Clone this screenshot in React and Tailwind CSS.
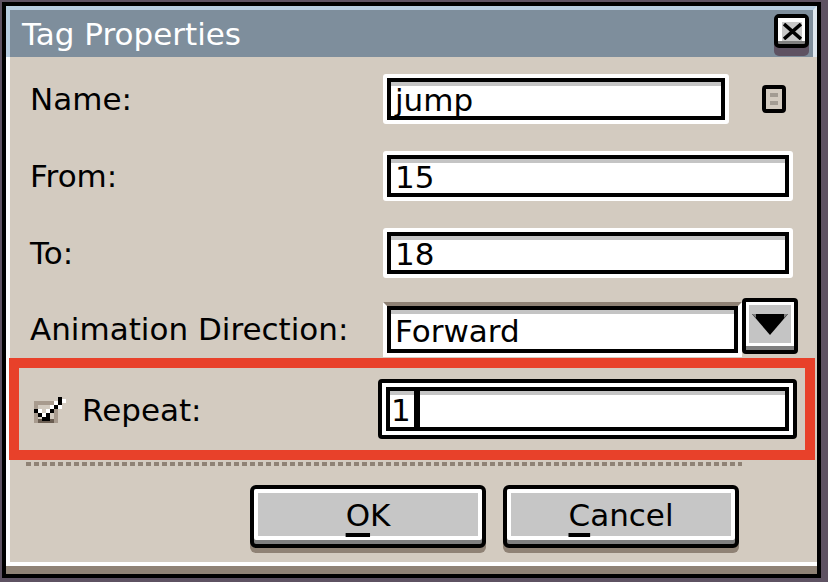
import React from 'react';

const font = { fontFamily: '"DejaVu Sans", "Liberation Sans", sans-serif' };

// plain text field: white outer ring, black ring, grey inset line on top
const TextField = ({ value, width }) => (
    <div className={`${width} h-[50px] border-4 border-white rounded-[3px]`}>
        <div className="h-full border-4 border-black bg-white shadow-[inset_0_4px_0_#c4c4c4] flex items-center pl-[4px] pt-[3px] text-black leading-none">
            {value}
        </div>
    </div>
);

const PixelButton = ({ children, width }) => (
    <button className={`${width} h-[63px] border-4 border-black rounded-[6px] bg-[#7f7f7f] pb-[4px] shadow-[0_5px_0_#8f8275]`}>
        <div className="h-full border-4 border-white rounded-[2px] bg-[#c6c6c6] flex items-center justify-center pt-[2px] text-black leading-none">
            {children}
        </div>
    </button>
);

const Mnemonic = ({ ch }) => (
    <span className="underline decoration-4 underline-offset-[7px] [text-decoration-skip-ink:none]">{ch}</span>
);

const App = () => {
    return (
        <div className="w-[828px] h-[582px] bg-[#5e5262] pt-[2px] pl-[2px] text-[31px]" style={font}>
            <div className="w-[819px] h-[576px] border-4 border-black flex flex-col bg-[#d3cbc0]">
                {/* Title bar */}
                <div className="h-[51px] border-t-4 border-l-4 border-r-4 border-t-[#b7cde0] border-l-[#b7cde0] border-r-[#dfe8ef] bg-[#7e8e9c] flex items-start justify-between">
                    <div className="pl-[12px] pt-[9px] text-white leading-none">Tag Properties</div>
                    <button className="mt-[4px] mr-[4px] w-[35px] h-[34px] border-4 border-black rounded-[5px] bg-[#7f7f7f] pb-[3px] shadow-[0_8px_0_#5e5262]">
                        <div className="h-full border-t-4 border-l-4 border-r-[3px] border-white bg-[#c8c8c8] flex items-center justify-center">
                            <svg width="19" height="17" viewBox="0 0 19 17">
                                <path d="M1 1 L18 16 M18 1 L1 16" stroke="#000" strokeWidth="3.5" />
                            </svg>
                        </div>
                    </button>
                </div>

                {/* Body */}
                <div className="flex-1 border-l-4 border-b-4 border-white flex flex-col pt-[17px]">
                    <div className="flex items-center h-[50px] pl-[20px]">
                        <div className="w-[353px] leading-none text-black">Name:</div>
                        <TextField value="jump" width="w-[346px]" />
                        <div className="ml-[33px] w-[24px] h-[28px] border-4 border-black rounded-[4px] bg-[#d3cbc0] flex flex-col items-center justify-center gap-[4px]">
                            <div className="w-[8px] h-[4px] bg-[#a39c93]" />
                            <div className="w-[8px] h-[4px] bg-[#a39c93]" />
                        </div>
                    </div>

                    <div className="flex items-center h-[50px] pl-[20px] mt-[27px]">
                        <div className="w-[353px] leading-none text-black">From:</div>
                        <TextField value="15" width="w-[410px]" />
                    </div>

                    <div className="flex items-center h-[50px] pl-[20px] mt-[27px]">
                        <div className="w-[353px] leading-none text-black">To:</div>
                        <TextField value="18" width="w-[410px]" />
                    </div>

                    <div className="flex items-start h-[59px] pl-[20px] mt-[20px]">
                        <div className="w-[353px] h-[55px] mt-[4px] flex items-center leading-none text-black">Animation Direction:</div>
                        <div className="w-[359px] h-[55px] mt-[4px] border-4 border-white border-t-[#8f8275]">
                            <div className="h-full border-4 border-black bg-white shadow-[inset_0_4px_0_#c4c4c4] flex items-center pl-[4px] pt-[3px] leading-none text-black">
                                Forward
                            </div>
                        </div>
                        <button className="w-[56px] h-[56px] border-4 border-black rounded-[4px] bg-[#7f7f7f] pb-[4px]">
                            <div className="h-full border-[3px] border-white bg-[#c4c4c4] flex items-center justify-center">
                                <svg width="36" height="21" viewBox="0 0 36 21">
                                    <polygon points="0,0 36,0 18,21" fill="#000" />
                                    <polygon points="0,0 4,0 4,4" fill="#7f7f7f" />
                                    <polygon points="32,0 36,0 32,4" fill="#7f7f7f" />
                                </svg>
                            </div>
                        </button>
                    </div>

                    {/* Repeat row, outlined */}
                    <div className="-ml-[1px] mt-[1px] w-[806px] h-[102px] border-[10px] border-[#e8412a] flex items-center pl-[15px] pr-[8px]">
                        <div className="w-[344px] flex items-center gap-[16px]">
                            <svg width="32" height="29" viewBox="0 0 32 29" shapeRendering="crispEdges">
                                <rect x="0" y="6" width="24" height="22" fill="#a89b8e" />
                                <rect x="4" y="10" width="16" height="14" fill="#d3cbc0" />
                                <rect x="4" y="24" width="16" height="4" fill="#6b5e52" />
                                <rect x="24" y="2" width="4" height="4" fill="#000" />
                                <rect x="20" y="6" width="4" height="4" fill="#fff" />
                                <rect x="24" y="6" width="4" height="4" fill="#000" />
                                <rect x="28" y="4" width="4" height="4" fill="#fff" />
                                <rect x="16" y="10" width="4" height="4" fill="#fff" />
                                <rect x="20" y="10" width="4" height="4" fill="#000" />
                                <rect x="24" y="10" width="4" height="4" fill="#fff" />
                                <rect x="0" y="14" width="4" height="4" fill="#000" />
                                <rect x="4" y="14" width="4" height="4" fill="#fff" />
                                <rect x="12" y="14" width="4" height="4" fill="#fff" />
                                <rect x="16" y="14" width="4" height="4" fill="#000" />
                                <rect x="4" y="18" width="4" height="4" fill="#000" />
                                <rect x="8" y="18" width="4" height="4" fill="#fff" />
                                <rect x="12" y="18" width="4" height="4" fill="#000" />
                                <rect x="8" y="22" width="8" height="4" fill="#000" />
                            </svg>
                            <span className="leading-none text-black pt-[2px]">Repeat:</span>
                        </div>
                        <div className="w-[419px] h-[60px] border-4 border-black rounded-[4px] bg-white p-[4px]">
                            <div className="h-full border-4 border-black bg-white shadow-[inset_0_4px_0_#c4c4c4] flex items-center pl-[1px] pt-[3px] leading-none text-black">
                                <span>1</span>
                                <span className="ml-[3px] w-[6px] h-[36px] -mt-[3px] bg-black" />
                            </div>
                        </div>
                    </div>

                    <div className="mt-[2px] ml-[16px] w-[716px] h-[4px] bg-[repeating-linear-gradient(90deg,#8f8275_0_5px,transparent_5px_8px)]" />

                    <div className="flex gap-[17px] pl-[240px] mt-[19px]">
                        <PixelButton width="w-[236px]"><Mnemonic ch="O" />K</PixelButton>
                        <PixelButton width="w-[236px]"><Mnemonic ch="C" />ancel</PixelButton>
                    </div>
                </div>
                <div className="h-[8px] bg-[#8f8275]" />
            </div>
        </div>
    );
};

export default App;
